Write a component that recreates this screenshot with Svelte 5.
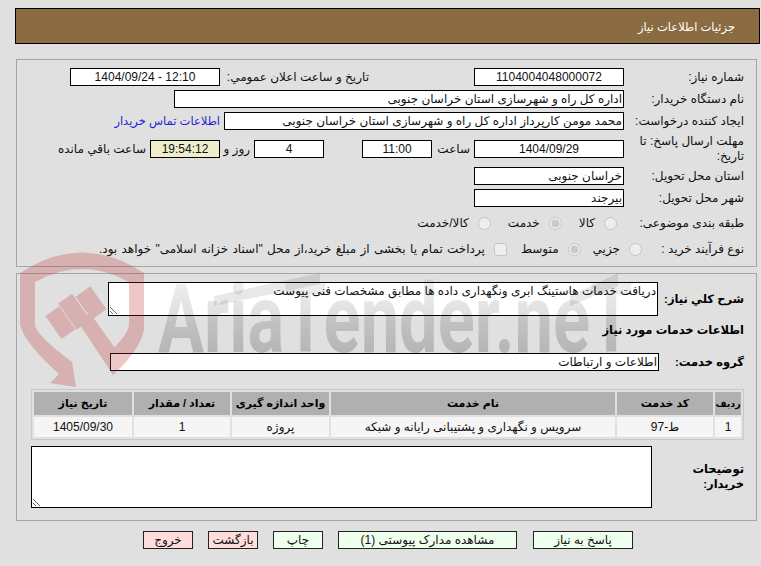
<script lang="ts">
  const services = [
    { row: "1", code: "ط-97", name: "سرویس و نگهداری و پشتیبانی رایانه و شبکه", unit: "پروژه", qty: "1", date: "1405/09/30" },
  ];
</script>

<div class="page" dir="rtl">
  <header class="title">جزئیات اطلاعات نیاز</header>

  <section class="panel top">
    <div class="row">
      <span class="label">شماره نیاز:</span>
      <input class="field w150 center" readonly value="1104004048000072" />
      <span class="label second">تاریخ و ساعت اعلان عمومي:</span>
      <input class="field w150 center" readonly value="12:10 - 1404/09/24" />
    </div>
    <div class="row">
      <span class="label">نام دستگاه خریدار:</span>
      <input class="field w450" readonly value="اداره کل راه و شهرسازی استان خراسان جنوبی" />
    </div>
    <div class="row">
      <span class="label">ایجاد کننده درخواست:</span>
      <input class="field w400" readonly value="محمد مومن کارپرداز اداره کل راه و شهرسازی استان خراسان جنوبی" />
      <a class="contact" href="#contact">اطلاعات تماس خریدار</a>
    </div>
    <div class="row deadline">
      <span class="label">مهلت ارسال پاسخ: تا تاریخ:</span>
      <input class="field w150 center" readonly value="1404/09/29" />
      <span class="hour">ساعت</span>
      <input class="field w70 center" readonly value="11:00" />
      <input class="field w70 center days" readonly value="4" />
      <span class="and">روز و</span>
      <input class="field w70 center timer" readonly value="19:54:12" />
      <span class="left">ساعت باقي مانده</span>
    </div>
    <div class="row">
      <span class="label">استان محل تحویل:</span>
      <input class="field w150" readonly value="خراسان جنوبی" />
    </div>
    <div class="row">
      <span class="label">شهر محل تحویل:</span>
      <input class="field w150" readonly value="بیرجند" />
    </div>
    <div class="row choice kind">
      <span class="label">طبقه بندی موضوعی:</span>
      <label><input type="radio" name="kind" disabled />کالا</label>
      <label><input type="radio" name="kind" disabled checked />خدمت</label>
      <label><input type="radio" name="kind" disabled />کالا/خدمت</label>
    </div>
    <div class="row choice process">
      <span class="label">نوع فرآیند خرید :</span>
      <label><input type="radio" name="proc" disabled />جزیي</label>
      <label><input type="radio" name="proc" disabled checked />متوسط</label>
      <label><input type="checkbox" disabled />پرداخت تمام یا بخشی از مبلغ خرید،از محل "اسناد خزانه اسلامی" خواهد بود.</label>
    </div>
  </section>

  <section class="panel bottom">
    <div class="row summary">
      <span class="label strong">شرح کلي نیاز:</span>
      <textarea class="area" readonly>دریافت خدمات هاستینگ ابری ونگهداری داده ها مطابق مشخصات فنی پیوست</textarea>
    </div>
    <h2 class="strong">اطلاعات خدمات مورد نیاز</h2>
    <div class="row group">
      <span class="label strong">گروه خدمت:</span>
      <input class="field wgroup" readonly value="اطلاعات و ارتباطات" />
    </div>

    <table>
      <thead>
        <tr>
          <th class="c-row">ردیف</th>
          <th class="c-code">کد خدمت</th>
          <th class="c-name">نام خدمت</th>
          <th class="c-unit">واحد اندازه گیری</th>
          <th class="c-qty">تعداد / مقدار</th>
          <th>تاریخ نیاز</th>
        </tr>
      </thead>
      <tbody>
        {#each services as s}
          <tr>
            <td>{s.row}</td>
            <td>{s.code}</td>
            <td>{s.name}</td>
            <td>{s.unit}</td>
            <td>{s.qty}</td>
            <td>{s.date}</td>
          </tr>
        {/each}
      </tbody>
    </table>

    <div class="row notes">
      <span class="label strong">توضیحات خریدار:</span>
      <textarea class="area big" readonly></textarea>
    </div>
  </section>

  <footer>
    <button class="ok reply">پاسخ به نیاز</button>
    <button class="ok docs">مشاهده مدارک پیوستی (1)</button>
    <button class="ok small">چاپ</button>
    <button class="danger small">بازگشت</button>
    <button class="danger small">خروج</button>
  </footer>

  <!-- translucent watermark lies over the panels and their fields -->
  <svg class="watermark" width="761" height="566" viewBox="0 0 761 566" aria-hidden="true">
    <defs>
      <linearGradient id="wm" gradientUnits="userSpaceOnUse" x1="0" y1="-68" x2="0" y2="0">
        <stop offset="0" stop-color="#000" stop-opacity="0.07" />
        <stop offset="1" stop-color="#000" stop-opacity="0.19" />
      </linearGradient>
    </defs>
    <g fill="#be2828" opacity="0.25">
      <path d="M20 273 Q82 232 144 273 L144 330 Q140 350 113 375 L103 358 Q128 336 129 325 L129 282 Q82 256 35 282 L35 325 Q36 335 72 362 L76 387 L50 383 L59 374 Q26 345 20 325 Z" />
      <rect x="-8" y="-14" width="17" height="28" transform="translate(60 323) rotate(-35)" />
      <rect x="-8" y="-16" width="17" height="32" transform="translate(74 312) rotate(-35)" />
      <rect x="-9" y="-14" width="18" height="28" transform="translate(91 303) rotate(-35)" />
      <polygon points="78,322 90,313 122,358 113,375" />
    </g>
    <g fill="#000" opacity="0.09">
      <polygon points="214,296 320,273 320,284 214,306" />
      <polygon points="570,296 618,273 618,286 570,306" />
    </g>
    <text
      transform="translate(158 352) scale(0.715 1)"
      font-family="Roboto, sans-serif"
      font-weight="700"
      font-size="96"
      fill="url(#wm)"
      direction="ltr">AriaTender.neT</text>
  </svg>
</div>

<style>
  :global(body) {
    margin: 0;
    background: #e0e0e0;
  }
  .page {
    position: relative;
    width: 761px;
    height: 566px;
    overflow: hidden;
    padding: 8px 1px 0 0;
    box-sizing: border-box;
    font-family: "Liberation Sans", "DejaVu Sans", sans-serif;
    font-size: 12px;
    color: #111;
  }
  .watermark {
    position: absolute;
    left: 0;
    top: 0;
    pointer-events: none;
  }
  .title {
    box-sizing: border-box;
    height: 36px;
    width: 745px;
    margin-left: auto;
    padding: 0 24px;
    line-height: 36px;
    background: #8b6b41;
    border: 1px solid #000;
    color: #fff;
    font-size: 11.5px;
  }
  .panel {
    box-sizing: border-box;
    width: 741px;
    margin: 15px 3px 0 0;
    padding: 8px 12px 0 0;
    border: 1px solid #a6a6a6;
  }
  .top {
    height: 208px;
  }
  .bottom {
    height: 248px;
    margin-top: 6px;
  }
  .row {
    display: flex;
    align-items: center;
    margin-bottom: 4px;
  }
  .label {
    width: 110px;
    flex: none;
    margin-left: 10px;
    line-height: 15px;
  }
  .label.second {
    width: 144px;
    margin: 0 105px 0 5px;
  }
  .strong {
    font-weight: 700;
    font-size: 11.5px;
    color: #000;
  }
  .field {
    box-sizing: border-box;
    height: 18px;
    border: 1px solid #000;
    background: #fff;
    padding: 0 1px;
    margin: 0;
    font: inherit;
    color: #111;
    outline: none;
    flex: none;
  }
  .center {
    text-align: center;
  }
  .w150 {
    width: 150px;
  }
  .w70 {
    width: 70px;
  }
  .w400 {
    width: 400px;
  }
  .w450 {
    width: 450px;
  }
  .wgroup {
    width: 549px;
  }
  .contact {
    margin-right: 4px;
    color: #2a1fd8;
    font-size: 11.5px;
    text-decoration: none;
  }
  .deadline {
    margin: 3px 0;
  }
  .hour {
    flex: none;
    width: 30px;
    margin: 0 4px 0 8px;
  }
  .days {
    margin-right: 38px;
  }
  .and {
    flex: none;
    width: 26px;
    margin: 0 4px;
    white-space: nowrap;
  }
  .timer {
    background: #eeeecc;
  }
  .left {
    margin-right: 4px;
    white-space: nowrap;
  }
  .choice {
    height: 20px;
    margin: 6px 0;
  }
  .choice label {
    display: flex;
    align-items: center;
    gap: 9px;
    white-space: nowrap;
  }
  .choice input {
    margin: 0;
    flex: none;
  }
  .kind label {
    margin-left: 17px;
  }
  .kind .label + label {
    margin-right: 7px;
  }
  .process .label + label {
    margin: 0 -18px 0 12px;
  }
  .process label + label {
    margin-left: 14px;
  }
  .process label:last-child {
    margin-left: 0;
    word-spacing: 1px;
  }
  .summary {
    margin-bottom: 0;
  }
  .summary .label {
    width: 76px;
    white-space: nowrap;
  }
  .area {
    box-sizing: border-box;
    display: block;
    width: 550px;
    height: 34px;
    margin: 0;
    padding: 1px;
    border: 1px solid #000;
    border-radius: 0;
    background: #fff;
    font: inherit;
    color: #111;
    outline: none;
    flex: none;
  }
  .big {
    width: 621px;
    height: 62px;
  }
  h2 {
    margin: 7px 0 0;
    line-height: 14px;
  }
  .group {
    margin: 16px 0 18px;
  }
  .group .label {
    width: 75px;
  }
  table {
    width: 713px;
    border: 1px solid #c8c8c8;
    border-spacing: 2px;
    table-layout: fixed;
    font-size: 12px;
    text-align: center;
  }
  th {
    height: 23px;
    padding: 0;
    background: #b0b0b0;
    font-size: 11px;
    font-weight: 700;
    color: #000;
  }
  td {
    height: 20px;
    padding: 0;
    background: #f5f5f5;
  }
  th.c-row {
    width: 26px;
    font-size: 9.5px;
  }
  .c-code {
    width: 96px;
  }
  .c-name {
    width: 284px;
  }
  .c-unit {
    width: 97px;
  }
  .c-qty {
    width: 96px;
  }
  .notes {
    margin-top: 6px;
  }
  .notes .label {
    width: 60px;
    margin-left: 32px;
  }
  footer {
    display: flex;
    gap: 15px;
    margin: 10px 127px 0 0;
  }
  button {
    box-sizing: border-box;
    height: 18px;
    padding: 0;
    border: 1px solid #222;
    border-radius: 0;
    font: inherit;
    color: #111;
  }
  .ok {
    background: #eeffee;
  }
  .danger {
    background: #ffdddd;
  }
  .reply {
    width: 100px;
    margin-left: 1px;
  }
  .docs {
    width: 179px;
  }
  .small {
    width: 50px;
  }
</style>
